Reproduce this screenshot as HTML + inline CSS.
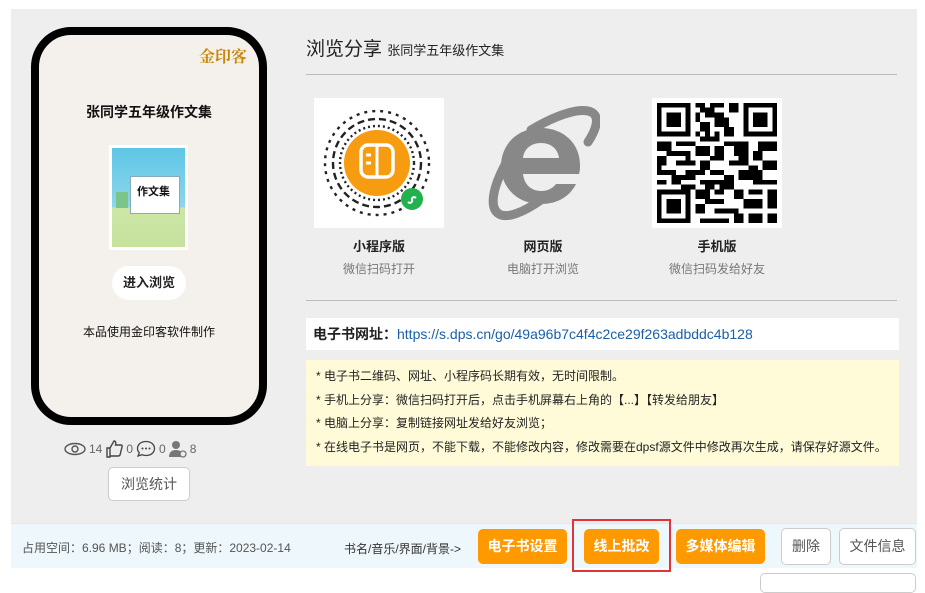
<!DOCTYPE html>
<html><head><meta charset="utf-8"><style>
*{margin:0;padding:0;box-sizing:border-box}
body{width:925px;height:579px;background:#fff;font-family:"Liberation Sans","Noto Sans CJK SC",sans-serif;position:relative;overflow:hidden;color:#222}
.abs{position:absolute}
.panel{left:11px;top:9px;width:906px;height:514px;background:#eeeeee}
.phone{left:31px;top:27px;width:236px;height:398px;border:8px solid #000;border-radius:40px;background:#f4f1ec}
.c{text-align:center}
.btn{position:absolute;border-radius:5px;font-size:14px;text-align:center;line-height:34px}
.or{background:#ff9900;color:#fff;font-weight:bold}
.wh{background:#fff;border:1px solid #ccc;color:#555;line-height:32px}
.tip{font-size:12px;color:#222;line-height:23.5px}
</style></head><body>
<div class="abs panel"></div>
<div class="abs phone"></div>
<div class="abs" style="left:199px;top:44px;font-size:16px;color:#c8860b;font-weight:bold;font-family:'Noto Serif CJK SC',serif">金印客</div>
<div class="abs c" style="left:38px;top:102px;width:222px;font-size:14px;font-weight:bold;color:#111">张同学五年级作文集</div>
<div class="abs" style="left:109px;top:145px;width:79px;height:105px;background:#fff;padding:3px">
 <div style="width:100%;height:100%;background:linear-gradient(#5ec6e6 0%,#8fd6ea 60%,#cde6a8 60%,#c5e29c 100%);position:relative">
  <div style="position:absolute;left:18px;top:28px;width:50px;height:38px;background:#fff;border:1px solid #8ab;"></div>
  <div style="position:absolute;left:25px;top:35px;font-size:11px;font-weight:bold;color:#111">作文集</div>
  <div style="position:absolute;left:4px;top:44px;width:12px;height:16px;background:#7cc58a"></div>
 </div></div>
<div class="abs c" style="left:112px;top:266px;width:74px;height:34px;border-radius:17px;background:#fff;font-size:13px;font-weight:bold;line-height:34px;color:#222">进入浏览</div>
<div class="abs c" style="left:38px;top:323px;width:222px;font-size:12px;color:#111">本品使用金印客软件制作</div>
<div class="abs" style="left:64px;top:440px;font-size:12px;color:#666;white-space:nowrap;display:flex;align-items:center;gap:3px">
 <svg width="22" height="14" viewBox="0 0 22 14"><ellipse cx="11" cy="7" rx="10" ry="5.5" fill="none" stroke="#555" stroke-width="1.4"/><circle cx="11" cy="7" r="3" fill="none" stroke="#555" stroke-width="1.4"/></svg>14
 <svg width="18" height="18" viewBox="0 0 18 18"><path d="M2 8h3v9H2zM5 8l4-7c2 0 2 2 1.5 4H16c1 0 1.5 1 1 2l-2 8c-.3.8-1 1-2 1H5" fill="none" stroke="#444" stroke-width="1.4"/></svg>0
 <svg width="20" height="18" viewBox="0 0 20 18"><path d="M10 1.5c5 0 8.5 3 8.5 7s-3.5 7-8.5 7c-1.5 0-3-.3-4-.8L2 16l1.3-3.3C2 11.5 1.5 10 1.5 8.5c0-4 3.5-7 8.5-7z" fill="none" stroke="#444" stroke-width="1.3"/><circle cx="6.5" cy="8.5" r="1" fill="#444"/><circle cx="10" cy="8.5" r="1" fill="#444"/><circle cx="13.5" cy="8.5" r="1" fill="#444"/></svg>0
 <svg width="18" height="18" viewBox="0 0 18 18"><circle cx="7" cy="5" r="4" fill="#777"/><path d="M0 17c0-5 3-7 7-7s6 2 6 4v3z" fill="#777"/><circle cx="14" cy="14" r="3" fill="#eee" stroke="#777" stroke-width="1.3"/></svg>8
</div>
<div class="btn wh" style="left:108px;top:467px;width:82px;height:34px;color:#555">浏览统计</div>

<div class="abs" style="left:306px;top:34px;font-size:19px;color:#222;white-space:nowrap">浏览分享 <span style="font-size:13px">张同学五年级作文集</span></div>
<div class="abs" style="left:306px;top:74px;width:591px;height:1px;background:#bbb"></div>

<div class="abs" style="left:314px;top:98px;width:130px;height:130px;background:#fff">
 <svg width="130" height="130" viewBox="0 0 130 130">
  <g stroke="#222" stroke-width="2.4" fill="none">
   <circle cx="63" cy="65" r="52" stroke-dasharray="3 5"/><circle cx="63" cy="65" r="44" stroke-dasharray="7 4"/><circle cx="63" cy="65" r="37" stroke-dasharray="2 3"/>
  </g>
  <circle cx="63" cy="65" r="33" fill="#f79b10"/>
  <rect x="47" y="47" width="32" height="32" rx="7" fill="none" stroke="#fff" stroke-width="3.5"/>
  <path d="M63 48v30M52 57h5M52 65h5" stroke="#fff" stroke-width="3"/>
  <circle cx="98" cy="101" r="11" fill="#22b14c"/>
  <path d="M94 104c2 2 5 0 4-2s2-4 4-2" stroke="#fff" stroke-width="2" fill="none"/>
 </svg>
</div>
<div class="abs" style="left:488px;top:106px;width:112px;height:115px">
 <svg width="112" height="115" viewBox="0 0 110 115">
  <path d="M52 22c-24 0-40 17-40 38s16 38 40 38c17 0 29-8 35-20H67c-4 5-9 7-15 7-10 0-17-7-18-17h56c1-3 1-6 1-9 0-22-17-37-39-37zm-18 30c1-9 8-15 18-15s17 6 18 15z" fill="#888"/>
  <path d="M18 55C3 82 0 102 10 108c8 5 25-2 42-14M42 24c30-18 55-24 63-16 5 5 2 16-6 28" fill="none" stroke="#888" stroke-width="9" stroke-linecap="round"/>
 </svg>
</div>
<div class="abs" style="left:652px;top:98px;width:130px;height:130px;background:#fff">
 <svg width="130" height="130" viewBox="-1 -1 27 27" shape-rendering="crispEdges">
  <g fill="#000"><path d="M0 0h7v7H0zM18 0h7v7h-7zM0 18h7v7H0z"/></g>
  <g fill="#fff"><path d="M1 1h5v5H1zM19 1h5v5h-5zM1 19h5v5H1z"/></g>
  <g fill="#000"><path d="M2 2h3v3H2zM20 2h3v3h-3zM2 20h3v3H2z"/>
  <path d="M8 0h2v1H8zM11 0h3v1h-3zM15 0h2v2h-2zM9 1h3v1H9zM8 2h1v2H8zM10 2h4v1h-4zM12 3h3v2h-3zM9 4h2v2H9zM14 5h2v2h-2zM8 6h1v1H8zM10 6h1v1h-1zM12 6h1v1h-1zM9 7h4v1H9zM0 8h3v2H0zM4 8h4v1H4zM14 8h5v1h-5zM21 8h4v2h-4zM2 10h5v1H2zM8 9h3v2H8zM12 9h2v3h-2zM16 9h3v2h-3zM20 10h2v2h-2zM0 11h2v2H0zM4 12h4v1H4zM9 12h2v2H9zM15 12h4v1h-4zM22 12h3v2h-3zM1 14h3v1H1zM6 14h2v2H6zM11 14h3v1h-3zM17 14h4v2h-4zM0 16h2v1H0zM3 16h2v1H3zM9 16h4v1H9zM14 15h2v3h-2zM20 16h5v1h-5zM8 18h3v2H8zM12 18h2v1h-2zM16 18h2v2h-2zM19 18h3v1h-3zM23 18h2v4h-2zM10 20h4v1h-4zM18 20h4v2h-4zM8 21h2v2H8zM12 22h5v1h-5zM19 23h3v2h-3zM9 24h6v1H9zM16 23h2v2h-2zM23 23h2v2h-2zM17 11h2v1h-2zM5 17h3v1H5zM0 13h1v2H0zM6 10h1v2H6zM11 11h1v1h-1zM7 14h1v1H7zM3 15h3v1H3zM8 14h2v1H8zM19 13h2v1h-2zM13 16h1v2h-1zM10 17h2v1h-2zM21 14h1v2h-1z"/></g>
 </svg>
</div>
<div class="abs c" style="left:314px;top:236px;width:130px;font-size:13px;font-weight:bold">小程序版</div>
<div class="abs c" style="left:314px;top:260px;width:130px;font-size:12px;color:#777">微信扫码打开</div>
<div class="abs c" style="left:478px;top:236px;width:130px;font-size:13px;font-weight:bold">网页版</div>
<div class="abs c" style="left:478px;top:260px;width:130px;font-size:12px;color:#777">电脑打开浏览</div>
<div class="abs c" style="left:652px;top:236px;width:130px;font-size:13px;font-weight:bold">手机版</div>
<div class="abs c" style="left:652px;top:260px;width:130px;font-size:12px;color:#777">微信扫码发给好友</div>
<div class="abs" style="left:306px;top:300px;width:591px;height:1px;background:#bbb"></div>

<div class="abs" style="left:306px;top:318px;width:593px;height:32px;background:#fff;font-size:14px;line-height:32px;padding-left:7px;white-space:nowrap"><b>电子书网址：</b><span style="color:#1a5fa8">https://s.dps.cn/go/49a96b7c4f4c2ce29f263adbddc4b128</span></div>
<div class="abs tip" style="left:306px;top:360px;width:593px;height:106px;background:#fffbd9;padding:5px 0 0 10px;white-space:nowrap">
* 电子书二维码、网址、小程序码长期有效，无时间限制。<br>* 手机上分享：微信扫码打开后，点击手机屏幕右上角的【...】【转发给朋友】<br>* 电脑上分享：复制链接网址发给好友浏览；<br>* 在线电子书是网页，不能下载，不能修改内容，修改需要在dpsf源文件中修改再次生成，请保存好源文件。
</div>

<div class="abs" style="left:11px;top:523px;width:906px;height:45px;background:#eef7fc;border-top:1px solid #dde8ef"></div>
<div class="abs" style="left:22px;top:539px;font-size:12px;color:#555;white-space:nowrap">占用空间：6.96 MB；阅读：8；更新：2023-02-14</div>
<div class="abs" style="left:344px;top:540px;font-size:12px;color:#333;white-space:nowrap">书名/音乐/界面/背景-&gt;</div>
<div class="btn or" style="left:478px;top:529px;width:89px;height:35px">电子书设置</div>
<div class="btn or" style="left:584px;top:529px;width:75px;height:35px">线上批改</div>
<div class="abs" style="left:572px;top:519px;width:99px;height:53px;border:2px solid #e0343a"></div>
<div class="btn or" style="left:676px;top:529px;width:89px;height:35px">多媒体编辑</div>
<div class="btn wh" style="left:781px;top:528px;width:50px;height:37px;line-height:35px">删除</div>
<div class="btn wh" style="left:839px;top:528px;width:77px;height:37px;line-height:35px">文件信息</div>
<div class="abs" style="left:760px;top:573px;width:156px;height:20px;border:1px solid #ccc;border-radius:5px;background:#fff"></div>
</body></html>
